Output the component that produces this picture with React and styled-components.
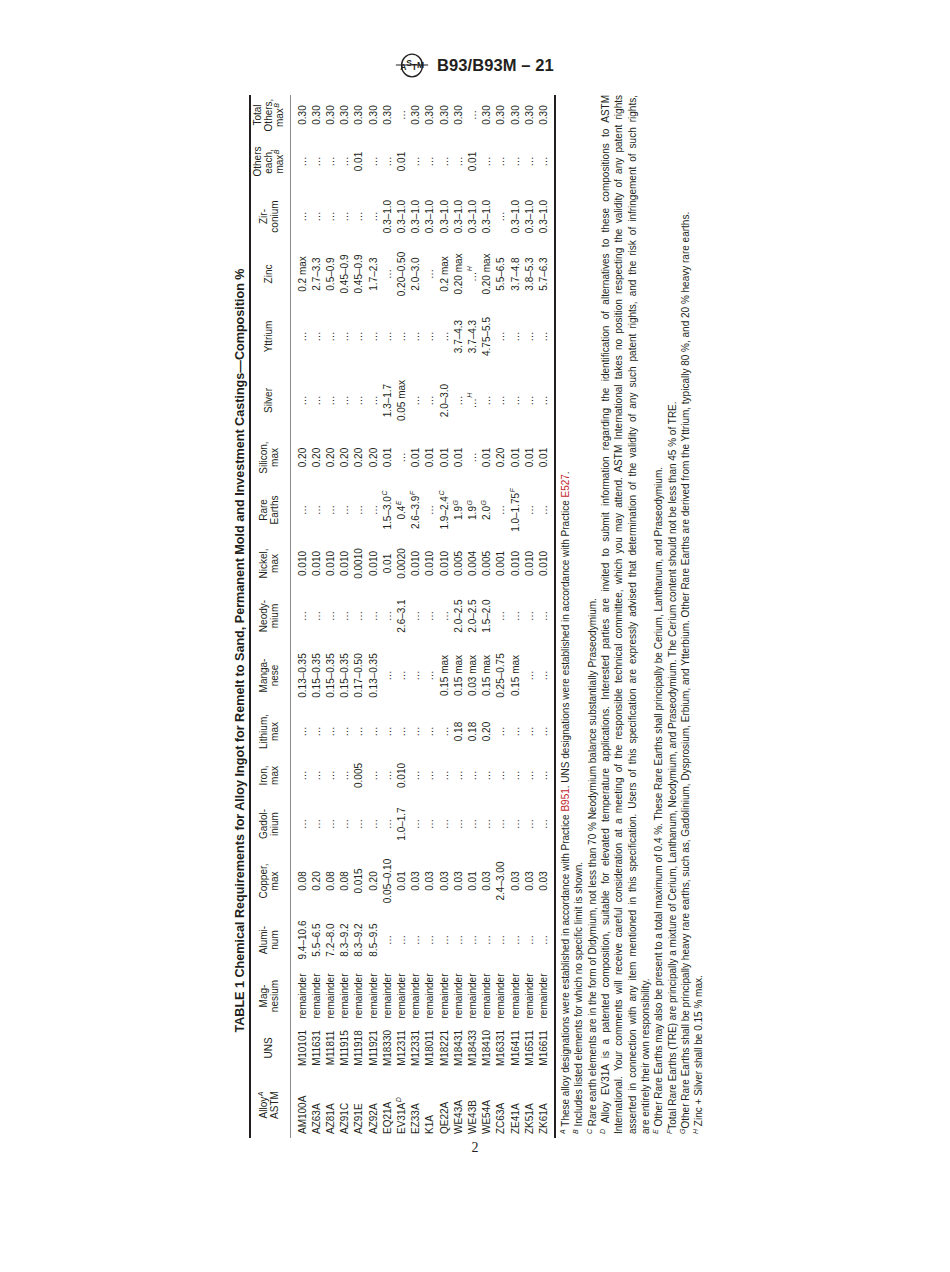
import React from 'react';
import styled, { createGlobalStyle } from 'styled-components';

const GlobalStyle = createGlobalStyle`
  html, body {
    margin: 0;
    padding: 0;
    background: #ffffff;
  }
  body {
    font-family: "Liberation Sans", Arial, sans-serif;
    color: #231f20;
  }
`;

const E = '…';

// value|X  -> value with superscript footnote mark X
const columns = [
  { w: 66, label: ['Alloy|A', 'ASTM'] },
  { w: 48, label: ['UNS'] },
  { w: 56, label: ['Mag-', 'nesium'] },
  { w: 56, label: ['Alumi-', 'num'] },
  { w: 62, label: ['Copper,', 'max'] },
  { w: 52, label: ['Gadol-', 'inium'] },
  { w: 45, label: ['Iron,', 'max'] },
  { w: 43, label: ['Lithium,', 'max'] },
  { w: 69, label: ['Manga-', 'nese'] },
  { w: 50, label: ['Neody-', 'mium'] },
  { w: 55, label: ['Nickel,', 'max'] },
  { w: 52, label: ['Rare', 'Earths'] },
  { w: 53, label: ['Silicon,', 'max'] },
  { w: 61, label: ['Silver'] },
  { w: 67, label: ['Yttrium'] },
  { w: 58, label: ['Zinc'] },
  { w: 57, label: ['Zir-', 'conium'] },
  { w: 53, label: ['Others', 'each,', 'max|B'] },
  { w: 40, label: ['Total', 'Others,', 'max|B'] },
];

const rows = [
  ['AM100A', 'M10101', 'remainder', '9.4–10.6', '0.08', E, E, E, '0.13–0.35', E, '0.010', E, '0.20', E, E, '0.2 max', E, E, '0.30'],
  ['AZ63A', 'M11631', 'remainder', '5.5–6.5', '0.20', E, E, E, '0.15–0.35', E, '0.010', E, '0.20', E, E, '2.7–3.3', E, E, '0.30'],
  ['AZ81A', 'M11811', 'remainder', '7.2–8.0', '0.08', E, E, E, '0.15–0.35', E, '0.010', E, '0.20', E, E, '0.5–0.9', E, E, '0.30'],
  ['AZ91C', 'M11915', 'remainder', '8.3–9.2', '0.08', E, E, E, '0.15–0.35', E, '0.010', E, '0.20', E, E, '0.45–0.9', E, E, '0.30'],
  ['AZ91E', 'M11918', 'remainder', '8.3–9.2', '0.015', E, '0.005', E, '0.17–0.50', E, '0.0010', E, '0.20', E, E, '0.45–0.9', E, '0.01', '0.30'],
  ['AZ92A', 'M11921', 'remainder', '8.5–9.5', '0.20', E, E, E, '0.13–0.35', E, '0.010', E, '0.20', E, E, '1.7–2.3', E, E, '0.30'],
  ['EQ21A', 'M18330', 'remainder', E, '0.05–0.10', E, E, E, E, E, '0.01', '1.5–3.0|C', '0.01', '1.3–1.7', E, E, '0.3–1.0', E, '0.30'],
  ['EV31A|D', 'M12311', 'remainder', E, '0.01', '1.0–1.7', '0.010', E, E, '2.6–3.1', '0.0020', '0.4|E', E, '0.05 max', E, '0.20–0.50', '0.3–1.0', '0.01', E],
  ['EZ33A', 'M12331', 'remainder', E, '0.03', E, E, E, E, E, '0.010', '2.6–3.9|F', '0.01', E, E, '2.0–3.0', '0.3–1.0', E, '0.30'],
  ['K1A', 'M18011', 'remainder', E, '0.03', E, E, E, E, E, '0.010', E, '0.01', E, E, E, '0.3–1.0', E, '0.30'],
  ['QE22A', 'M18221', 'remainder', E, '0.03', E, E, E, '0.15 max', E, '0.010', '1.9–2.4|C', '0.01', '2.0–3.0', E, '0.2 max', '0.3–1.0', E, '0.30'],
  ['WE43A', 'M18431', 'remainder', E, '0.03', E, E, '0.18', '0.15 max', '2.0–2.5', '0.005', '1.9|G', '0.01', E, '3.7–4.3', '0.20 max', '0.3–1.0', E, '0.30'],
  ['WE43B', 'M18433', 'remainder', E, '0.01', E, E, '0.18', '0.03 max', '2.0–2.5', '0.004', '1.9|G', E, E + '|H', '3.7–4.3', E + '|H', '0.3–1.0', '0.01', E],
  ['WE54A', 'M18410', 'remainder', E, '0.03', E, E, '0.20', '0.15 max', '1.5–2.0', '0.005', '2.0|G', '0.01', E, '4.75–5.5', '0.20 max', '0.3–1.0', E, '0.30'],
  ['ZC63A', 'M16331', 'remainder', E, '2.4–3.00', E, E, E, '0.25–0.75', E, '0.001', E, '0.20', E, E, '5.5–6.5', E, E, '0.30'],
  ['ZE41A', 'M16411', 'remainder', E, '0.03', E, E, E, '0.15 max', E, '0.010', '1.0–1.75|F', '0.01', E, E, '3.7–4.8', '0.3–1.0', E, '0.30'],
  ['ZK51A', 'M16511', 'remainder', E, '0.03', E, E, E, E, E, '0.010', E, '0.01', E, E, '3.8–5.3', '0.3–1.0', E, '0.30'],
  ['ZK61A', 'M16611', 'remainder', E, '0.03', E, E, E, E, E, '0.010', E, '0.01', E, E, '5.7–6.3', '0.3–1.0', E, '0.30'],
];

const Marked = ({ text }) => {
  const [main, mark] = text.split('|');
  return (
    <>
      {main}
      {mark && <Sup>{mark}</Sup>}
    </>
  );
};

const logoLetters = [
  { ch: 'A', x: 11, y: 19 },
  { ch: 'S', x: 17, y: 15 },
  { ch: 'T', x: 22.5, y: 19 },
  { ch: 'M', x: 29, y: 17 },
];

const AstmLogo = () => (
  <Logo viewBox="0 0 40 28" aria-hidden="true">
    <ellipse cx="20" cy="14" rx="11" ry="12" fill="none" stroke="#231f20" strokeWidth="1.4" />
    <path d="M3 13.5 H37" stroke="#231f20" strokeWidth="1.1" />
    {logoLetters.map((l) => (
      <text
        key={l.ch}
        x={l.x}
        y={l.y}
        textAnchor="middle"
        fontFamily="Liberation Sans, Arial, sans-serif"
        fontWeight="bold"
        fontSize="9"
        fill="#231f20"
      >
        {l.ch}
      </text>
    ))}
  </Logo>
);

const App = () => {
  return (
    <>
      <GlobalStyle />
      <Page>
        <Header>
          <AstmLogo />
          <DocId>B93/B93M – 21</DocId>
        </Header>

        <Sheet>
          <Rotated>
            <Title>
              TABLE 1 Chemical Requirements for Alloy Ingot for Remelt to Sand, Permanent Mold and Investment Castings—Composition %
            </Title>
            <Table>
              <colgroup>
                {columns.map((c, i) => (
                  <Col key={i} $w={c.w} />
                ))}
              </colgroup>
              <thead>
                <tr>
                  {columns.map((c, i) => (
                    <HeadCell key={i}>
                      {c.label.map((line, j) => (
                        <HeadLine key={j}>
                          <Marked text={line} />
                        </HeadLine>
                      ))}
                    </HeadCell>
                  ))}
                </tr>
              </thead>
              <tbody>
                {rows.map((r, i) => (
                  <Row key={i}>
                    {r.map((v, j) => (
                      <Cell key={j} $left={j === 0}>
                        <Marked text={v} />
                      </Cell>
                    ))}
                  </Row>
                ))}
              </tbody>
            </Table>

            <Notes>
              <Note>
                <Mark>A</Mark> These alloy designations were established in accordance with Practice <Ref>B951</Ref>. UNS designations were established in accordance with Practice <Ref>E527</Ref>.
              </Note>
              <Note>
                <Mark>B</Mark> Includes listed elements for which no specific limit is shown.
              </Note>
              <Note>
                <Mark>C</Mark> Rare earth elements are in the form of Didymium, not less than 70 % Neodymium balance substantially Praseodymium.
              </Note>
              <Note $full>
                <Mark>D</Mark> Alloy EV31A is a patented composition, suitable for elevated temperature applications. Interested parties are invited to submit information regarding the identification of alternatives to these compositions to ASTM
              </Note>
              <Note $full>
                International. Your comments will receive careful consideration at a meeting of the responsible technical committee, which you may attend. ASTM International takes no position respecting the validity of any patent rights
              </Note>
              <Note $full>
                asserted in connection with any item mentioned in this specification. Users of this specification are expressly advised that determination of the validity of any such patent rights, and the risk of infringement of such rights,
              </Note>
              <Note>are entirely their own responsibility.</Note>
              <Note>
                <Mark>E</Mark> Other Rare Earths may also be present to a total maximum of 0.4 %. These Rare Earths shall principally be Cerium, Lanthanum, and Praseodymium.
              </Note>
              <Note>
                <Mark>F</Mark>Total Rare Earths (TRE) are principally a mixture of Cerium, Lanthanum, Neodymium, and Praseodymium. The Cerium content should not be less than 45 % of TRE.
              </Note>
              <Note>
                <Mark>G</Mark>Other Rare Earths shall be principally heavy rare earths, such as, Gadolinium, Dysprosium, Erbium, and Ytterbium. Other Rare Earths are derived from the Yttrium, typically 80 %, and 20 % heavy rare earths.
              </Note>
              <Note>
                <Mark>H</Mark> Zinc + Silver shall be 0.15 % max.
              </Note>
            </Notes>
          </Rotated>
        </Sheet>

        <PageNumber>2</PageNumber>
      </Page>
    </>
  );
};

// page frame
const Page = styled.div`
  width: 950px;
  min-height: 1272px;
  padding-top: 52px;
  box-sizing: border-box;
`;

const Header = styled.header`
  display: flex;
  align-items: center;
  gap: 6px;
  margin-left: 393px;
  height: 26px;
`;

const Logo = styled.svg`
  width: 38px;
  height: 27px;
  flex: none;
  overflow: visible;
`;

const DocId = styled.span`
  font-weight: bold;
  font-size: 16.5px;
  letter-spacing: 0.1px;
`;

// footprint of the turned table on the page
const Sheet = styled.div`
  width: 480px;
  height: 1043px;
  margin: 17px 0 0 232px;
`;

// the table is set in landscape and turned a quarter to the left
const Rotated = styled.div`
  width: 1043px;
  height: 480px;
  transform-origin: 0 0;
  transform: translateY(1043px) rotate(-90deg);
`;

const Title = styled.div`
  font-weight: bold;
  font-size: 12.6px;
  line-height: 16px;
  text-align: center;
  padding-right: 68px;
  white-space: nowrap;
`;

const Table = styled.table`
  width: 1043px;
  table-layout: fixed;
  border-collapse: collapse;
  margin-top: 1px;
  border-top: 2px solid #231f20;
  border-bottom: 2px solid #231f20;
  font-size: 10px;
`;

const Col = styled.col`
  width: ${({ $w }) => $w}px;
`;

const HeadCell = styled.th`
  height: 40px;
  padding: 0 0 3px;
  font-weight: normal;
  text-align: center;
  vertical-align: middle;
  border-bottom: 1px solid #8c8c8c;
  box-sizing: border-box;
`;

const HeadLine = styled.div`
  line-height: 11px;
  white-space: nowrap;
`;

const Row = styled.tr`
  &:first-child td {
    padding-top: 5px;
  }
  &:last-child td {
    padding-bottom: 3px;
  }
`;

const Cell = styled.td`
  padding: 0;
  padding-left: ${({ $left }) => ($left ? '4px' : '0')};
  line-height: 14.2px;
  white-space: nowrap;
  text-align: ${({ $left }) => ($left ? 'left' : 'center')};
`;

const Sup = styled.sup`
  font-size: 7px;
  font-style: italic;
  line-height: 0;
  vertical-align: 4px;
  margin-left: 0.5px;
`;

const Notes = styled.div`
  margin-top: 3px;
  font-size: 10px;
`;

const Note = styled.p`
  margin: 0;
  padding-left: 4px;
  line-height: 13.3px;
  white-space: nowrap;
  text-align: ${({ $full }) => ($full ? 'justify' : 'left')};
  text-align-last: ${({ $full }) => ($full ? 'justify' : 'auto')};
  ${({ $full }) => $full && 'white-space: normal;'}
`;

const Mark = styled.sup`
  font-size: 7px;
  font-style: italic;
  line-height: 0;
  vertical-align: 4px;
`;

const Ref = styled.span`
  color: #c1272d;
`;

const PageNumber = styled.div`
  margin-top: 2px;
  text-align: center;
  font-family: "Liberation Serif", "Times New Roman", serif;
  font-size: 14px;
`;

export default App;
